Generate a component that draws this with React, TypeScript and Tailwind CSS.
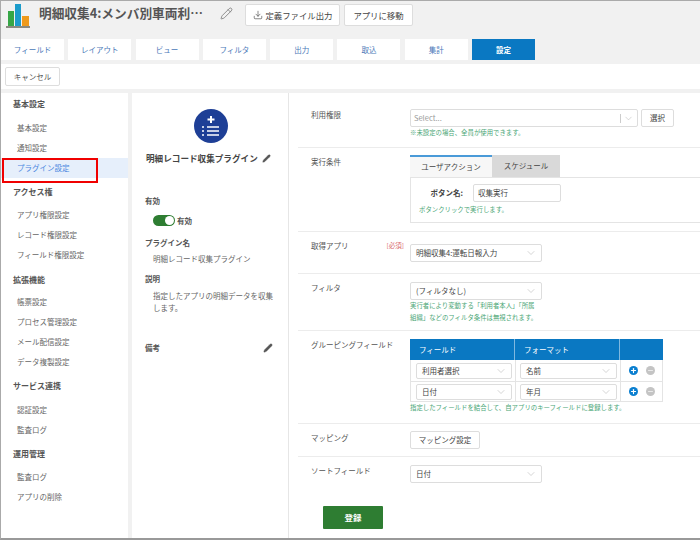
import React from 'react';
import { ChevronDown, Download, Pencil, Plus, Minus } from 'lucide-react';

const FONT = '"Noto Sans CJK JP", "Noto Sans", sans-serif';

const tabs = ['フィールド', 'レイアウト', 'ビュー', 'フィルタ', '出力', '取込', '集計', '設定'];

const menu: { title: string; items: string[]; h: string }[] = [
  { title: '基本設定', items: ['基本設定', '通知設定', 'プラグイン設定'], h: 'h-[25px] pb-[3px]' },
  { title: 'アクセス権', items: ['アプリ権限設定', 'レコード権限設定', 'フィールド権限設定'], h: 'h-[27px]' },
  { title: '拡張機能', items: ['帳票設定', 'プロセス管理設定', 'メール配信設定', 'データ複製設定'], h: 'h-[27px] pt-[2px]' },
  { title: 'サービス連携', items: ['認証設定', '監査ログ'], h: 'h-[28px]' },
  { title: '運用管理', items: ['監査ログ', 'アプリの削除'], h: 'h-[27px]' },
];

const Select: React.FC<{ value: string; w: string; h?: string }> = ({ value, w, h = 'h-[18px]' }) => (
  <div className={`${w} ${h} shrink-0 flex items-center justify-between pl-[5px] pr-[4px] border border-[#ddd] rounded-[2px] bg-white text-[7.5px] text-[#444]`}>
    <span>{value}</span>
    <ChevronDown size={12} strokeWidth={1} className="text-[#aaa]" />
  </div>
);

const Row: React.FC<{ label: string; h: string; border?: boolean; required?: boolean; children: React.ReactNode }> = ({ label, h, border = true, required, children }) => (
  <div className={`${h} flex shrink-0 ${border ? 'border-b border-[#ececec]' : ''}`}>
    <div className="w-[112px] shrink-0 pl-[13px] flex justify-between pr-[6px] pt-[7px] text-[7.5px] leading-[13px] text-[#555] whitespace-nowrap">
      <span>{label}</span>
      {required && <span className="text-[6.5px] text-[#d9686a]">[必須]</span>}
    </div>
    <div className="flex-1 min-w-0">{children}</div>
  </div>
);

const Hint: React.FC<{ children: React.ReactNode; className?: string }> = ({ children, className = '' }) => (
  <div className={`text-[6.4px] leading-[12px] text-[#4aa676] ${className}`}>{children}</div>
);

const GroupRow: React.FC<{ field: string; format: string; h: string }> = ({ field, format, h }) => (
  <div className={`${h} flex border-b border-x border-[#e4e4e4]`}>
    <div className="w-[105px] pl-[5px] flex items-center border-r border-[#e4e4e4]"><Select value={field} w="w-[96px]" h="h-[16px]" /></div>
    <div className="w-[105px] pl-[4px] flex items-center border-r border-[#e4e4e4]"><Select value={format} w="w-[97px]" h="h-[16px]" /></div>
    <div className="flex-1 flex items-center gap-[8px] pl-[8px]">
      <span className="w-[9px] h-[9px] rounded-full bg-[#0a7fd0] flex items-center justify-center"><Plus size={7} strokeWidth={4} className="text-white" /></span>
      <span className="w-[9px] h-[9px] rounded-full bg-[#c4c4c4] flex items-center justify-center"><Minus size={7} strokeWidth={3} className="text-[#eee]" /></span>
    </div>
  </div>
);

export default function App() {
  return (
    <div className="w-[700px] h-[540px] flex flex-col overflow-hidden bg-[#f1f1f1] border-t border-l border-[#aaa] border-b-2 border-b-[#999]" style={{ fontFamily: FONT }}>
      {/* header */}
      <div className="h-[38px] shrink-0 flex items-start">
        <svg width="32" height="28" viewBox="0 0 32 28" className="ml-[5px] mt-[1px] shrink-0">
          <rect x="2" y="9" width="6" height="15" fill="#36a646" />
          <rect x="9" y="2" width="6" height="22" fill="#1c9ccb" />
          <rect x="16" y="14" width="7" height="10" fill="#ee9a1c" />
          <rect x="0" y="24" width="24" height="2" fill="#8a8a80" />
        </svg>
        <div className="ml-[1px] mt-[2px] w-[171px] text-[12.7px] leading-[20px] font-bold text-[#555] whitespace-nowrap">明細収集4:メンバ別車両利…</div>
        <Pencil size={13} strokeWidth={1.5} className="ml-[10px] mt-[6px] text-[#777]" />
        <div className="ml-[12px] mt-[3px] w-[95px] h-[22px] flex items-center justify-center gap-[3px] bg-white border border-[#ddd] rounded-[2px] text-[8.4px] text-[#444]">
          <Download size={10} strokeWidth={1.5} />定義ファイル出力
        </div>
        <div className="ml-[4px] mt-[3px] w-[69px] h-[22px] flex items-center justify-center bg-white border border-[#ddd] rounded-[2px] text-[8.4px] text-[#444]">アプリに移動</div>
      </div>
      {/* tabs */}
      <div className="h-[25px] shrink-0 flex items-start gap-[4.3px]">
        {tabs.map((t) => (
          <div key={t} className={`w-[63px] h-[21px] flex items-center justify-center text-[7.5px] ${t === '設定' ? 'bg-[#0a78c2] text-white font-bold' : 'bg-white text-[#4a78b8]'}`}>{t}</div>
        ))}
      </div>
      {/* toolbar */}
      <div className="h-[25px] shrink-0 bg-white flex items-center pl-[4px]">
        <div className="w-[55px] h-[19px] flex items-center justify-center bg-white border border-[#ddd] rounded-[2px] text-[7.5px] text-[#555]">キャンセル</div>
      </div>
      {/* body */}
      <div className="flex-1 min-h-0 flex mt-[4px] gap-[4px]">
        <div className="w-[127px] shrink-0 bg-white">
          {menu.map((sec) => (
            <div key={sec.title}>
              <div className={`${sec.h} pl-[12px] flex items-center text-[8px] font-bold text-[#555]`}>{sec.title}</div>
              {sec.items.map((it) => {
                const active = it === 'プラグイン設定';
                return (
                  <div key={it} className={`h-[20px] pl-[16px] flex items-center text-[7.5px] ${active ? 'bg-[#e6effb] text-[#4a86e0] relative' : 'text-[#666]'}`}>
                    {it}
                    {active && <div className="absolute left-[1px] top-0 w-[96px] h-[25px] border-2 border-[#f00000]" />}
                  </div>
                );
              })}
            </div>
          ))}
        </div>

        <div className="w-[157px] shrink-0 bg-white border-r border-[#e6e6e6] flex flex-col pl-[13px]">
          <div className="ml-[49px] mt-[16px] w-[34px] h-[34px] rounded-full bg-[#1e3f96] flex items-center justify-center">
            <svg width="20" height="22" viewBox="0 0 20 22" fill="none" stroke="#fff">
              <path d="M10 1v7M6.5 4.500h7" strokeWidth="2" />
              <path d="M6 12h12M6 16h12M6 20h12" strokeWidth="1.500" />
              <path d="M1 12h2M1 16h2M1 20h2" strokeWidth="1.500" />
            </svg>
          </div>
          <div className="mt-[8px] ml-[1px] flex items-center gap-[4px] text-[8.6px] leading-[14px] font-bold text-[#444] whitespace-nowrap">
            明細レコード収集プラグイン
            <Pencil size={9} fill="#555" strokeWidth={1} className="text-[#555]" />
          </div>
          <div className="mt-[30px] text-[7.5px] leading-[12px] font-bold text-[#555]">有効</div>
          <div className="mt-[8px] ml-[8px] flex items-center gap-[2px] text-[7.5px] text-[#555] font-bold">
            <div className="w-[22px] h-[11px] rounded-full bg-[#2e7d32] flex items-center justify-end pr-[1px]"><div className="w-[9px] h-[9px] rounded-full bg-white" /></div>
            有効
          </div>
          <div className="mt-[11px] text-[7.5px] leading-[12px] font-bold text-[#555]">プラグイン名</div>
          <div className="mt-[4px] ml-[8px] text-[7.5px] leading-[12px] text-[#666]">明細レコード収集プラグイン</div>
          <div className="mt-[8px] text-[7.5px] leading-[12px] font-bold text-[#555]">説明</div>
          <div className="mt-[5px] ml-[8px] w-[122px] text-[7.5px] leading-[12px] text-[#666]">指定したアプリの明細データを収集します。</div>
          <div className="mt-[28px] flex items-center justify-between pr-[15px] text-[7.5px] leading-[12px] font-bold text-[#555]">
            備考
            <Pencil size={10} fill="#555" strokeWidth={1} className="text-[#555]" />
          </div>
        </div>

        <div className="flex-1 min-w-0 bg-white -ml-[4px] pl-[9px] flex flex-col pt-[8px]">
          <Row label="利用権限" h="h-[47px]">
            <div className="flex gap-[3px] mt-[8px]">
              <div className="w-[228px] h-[18px] flex items-center justify-between pl-[3px] pr-[3px] border border-[#ddd] rounded-[2px] text-[7.5px] text-[#999]">
                Select...
                <span className="flex items-center border-l border-[#ccc] pl-[2px] h-[9px]"><ChevronDown size={11} strokeWidth={1} className="text-[#aaa]" /></span>
              </div>
              <div className="w-[33px] h-[18px] flex items-center justify-center border border-[#ddd] rounded-[2px] text-[7.5px] text-[#444]">選択</div>
            </div>
            <Hint>※未設定の場合、全員が使用できます。</Hint>
          </Row>
          <Row label="実行条件" h="h-[84px]">
            <div className="mt-[7px] flex h-[22px]">
              <div className="w-[82px] border-t-2 border-[#4a9ad8] bg-[#f7f7f7] flex items-center justify-center text-[7.5px] text-[#444]">ユーザアクション</div>
              <div className="w-[68px] bg-[#d9d9d9] flex items-center justify-center text-[7.5px] text-[#444]">スケジュール</div>
            </div>
            <div className="h-[46px] border border-r-0 border-[#e4e4e4] pl-[8px]">
              <div className="flex items-center mt-[6px]">
                <span className="w-[44px] text-right text-[7.5px] font-bold text-[#444] whitespace-nowrap">ボタン名:</span>
                <div className="ml-[10px] w-[88px] h-[18px] flex items-center pl-[4px] border border-[#ddd] rounded-[2px] text-[7.5px] text-[#444]">収集実行</div>
              </div>
              <Hint className="mt-[2px]">ボタンクリックで実行します。</Hint>
            </div>
          </Row>
          <Row label="取得アプリ" h="h-[42px]" required>
            <div className="pt-[12px]"><Select value="明細収集4:運転日報入力" w="w-[132px]" /></div>
          </Row>
          <Row label="フィルタ" h="h-[57px]">
            <div className="pt-[8px]"><Select value="(フィルタなし)" w="w-[132px]" /></div>
            <Hint className="whitespace-nowrap">実行者により変動する「利用者本人」「所属<br />組織」などのフィルタ条件は無視されます。</Hint>
          </Row>
          <Row label="グルーピングフィールド" h="h-[93px]">
            <div className="mt-[8px] w-[253px]">
              <div className="h-[21px] flex bg-[#0a78c2] text-white text-[7.5px]">
                <div className="w-[105px] pl-[9px] flex items-center border-r border-[#7fb8e0]">フィールド</div>
                <div className="w-[105px] pl-[9px] flex items-center border-r border-[#7fb8e0]">フォーマット</div>
              </div>
              <GroupRow field="利用者選択" format="名前" h="h-[22px]" />
              <GroupRow field="日付" format="年月" h="h-[20px]" />
            </div>
            <Hint className="whitespace-nowrap">指定したフィールドを結合して、自アプリのキーフィールドに登録します。</Hint>
          </Row>
          <Row label="マッピング" h="h-[33px]">
            <div className="mt-[7px] w-[70px] h-[18px] flex items-center justify-center border border-[#ddd] rounded-[2px] text-[7.5px] text-[#444]">マッピング設定</div>
          </Row>
          <Row label="ソートフィールド" h="h-[49px]" border={false}>
            <div className="pt-[8px]"><Select value="日付" w="w-[132px]" /></div>
          </Row>
          <div className="ml-[25px] w-[60px] h-[23px] flex items-center justify-center bg-[#2e7d32] text-white text-[8.5px] font-bold rounded-[1px]">登録</div>
        </div>
      </div>
    </div>
  );
}
